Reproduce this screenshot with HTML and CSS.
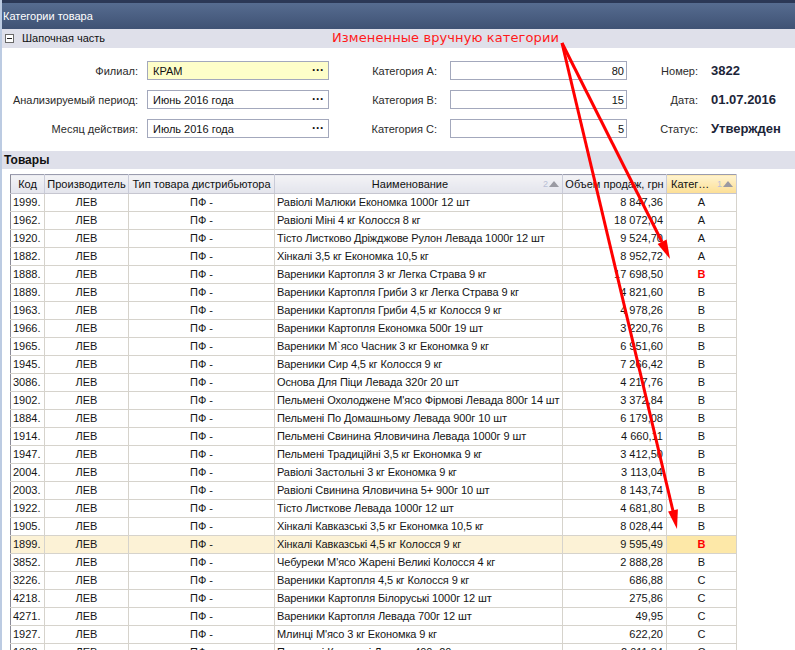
FILE: index.html
```html
<!DOCTYPE html>
<html lang="ru">
<head>
<meta charset="utf-8">
<title>Категории товара</title>
<link rel="stylesheet" href="styles.css">
</head>
<body>
<div class="page">
  <div class="titlebar">Категории товара</div>
  <div class="section-bar"><span class="collapse-box"></span>Шапочная часть</div>

  <div class="form">
    <label class="lbl lbl-a">Филиал:</label>
    <div class="field field-a yellow"><span>КРАМ</span><span class="dots">···</span></div>
    <label class="lbl lbl-b">Категория A:</label>
    <div class="field field-b num"><span>80</span></div>
    <label class="lbl lbl-c">Номер:</label>
    <div class="value">3822</div>

    <label class="lbl lbl-a">Анализируемый период:</label>
    <div class="field field-a"><span>Июнь 2016 года</span><span class="dots">···</span></div>
    <label class="lbl lbl-b">Категория B:</label>
    <div class="field field-b num"><span>15</span></div>
    <label class="lbl lbl-c">Дата:</label>
    <div class="value">01.07.2016</div>

    <label class="lbl lbl-a">Месяц действия:</label>
    <div class="field field-a"><span>Июль 2016 года</span><span class="dots">···</span></div>
    <label class="lbl lbl-b">Категория C:</label>
    <div class="field field-b num"><span>5</span></div>
    <label class="lbl lbl-c">Статус:</label>
    <div class="value">Утвержден</div>
  </div>

  <div class="group-bar">Товары</div>

  <div class="grid-wrap">
    <table class="grid">
      <colgroup>
        <col class="c-code"><col class="c-prod"><col class="c-type"><col class="c-name"><col class="c-sum"><col class="c-cat">
      </colgroup>
      <thead>
        <tr>
          <th>Код</th>
          <th>Производитель</th>
          <th>Тип товара дистрибьютора</th>
          <th class="sorted">Наименование<span class="sort">2<i></i></span></th>
          <th>Объем продаж, грн</th>
          <th class="sorted cat-head">Катег…<span class="sort">1<i></i></span></th>
        </tr>
      </thead>
      <tbody>
        <tr><td>1999.</td><td class="ctr">ЛЕВ</td><td class="ctr">ПФ -</td><td class="name">Равіолі Малюки Економка 1000г 12 шт</td><td class="num">8 847,36</td><td class="ctr">A</td></tr>
        <tr><td>1962.</td><td class="ctr">ЛЕВ</td><td class="ctr">ПФ -</td><td class="name">Равіолі Міні 4 кг Колосся 8 кг</td><td class="num">18 072,04</td><td class="ctr">A</td></tr>
        <tr><td>1920.</td><td class="ctr">ЛЕВ</td><td class="ctr">ПФ -</td><td class="name">Тісто Листково Дріжджове Рулон Левада 1000г 12 шт</td><td class="num">9 524,70</td><td class="ctr">A</td></tr>
        <tr><td>1882.</td><td class="ctr">ЛЕВ</td><td class="ctr">ПФ -</td><td class="name">Хінкалі 3,5 кг Економка 10,5 кг</td><td class="num">8 952,72</td><td class="ctr">A</td></tr>
        <tr><td>1888.</td><td class="ctr">ЛЕВ</td><td class="ctr">ПФ -</td><td class="name">Вареники Картопля 3 кг Легка Страва 9 кг</td><td class="num">17 698,50</td><td class="ctr changed">B</td></tr>
        <tr><td>1889.</td><td class="ctr">ЛЕВ</td><td class="ctr">ПФ -</td><td class="name">Вареники Картопля Гриби 3 кг Легка Страва 9 кг</td><td class="num">4 821,60</td><td class="ctr">B</td></tr>
        <tr><td>1963.</td><td class="ctr">ЛЕВ</td><td class="ctr">ПФ -</td><td class="name">Вареники Картопля Гриби 4,5 кг Колосся 9 кг</td><td class="num">4 978,26</td><td class="ctr">B</td></tr>
        <tr><td>1966.</td><td class="ctr">ЛЕВ</td><td class="ctr">ПФ -</td><td class="name">Вареники Картопля Економка 500г 19 шт</td><td class="num">3 220,76</td><td class="ctr">B</td></tr>
        <tr><td>1965.</td><td class="ctr">ЛЕВ</td><td class="ctr">ПФ -</td><td class="name">Вареники М`ясо Часник 3 кг Економка 9 кг</td><td class="num">6 951,60</td><td class="ctr">B</td></tr>
        <tr><td>1945.</td><td class="ctr">ЛЕВ</td><td class="ctr">ПФ -</td><td class="name">Вареники Сир 4,5 кг Колосся 9 кг</td><td class="num">7 266,42</td><td class="ctr">B</td></tr>
        <tr><td>3086.</td><td class="ctr">ЛЕВ</td><td class="ctr">ПФ -</td><td class="name">Основа Для Піци Левада 320г 20 шт</td><td class="num">4 217,76</td><td class="ctr">B</td></tr>
        <tr><td>1902.</td><td class="ctr">ЛЕВ</td><td class="ctr">ПФ -</td><td class="name">Пельмені Охолоджене М'ясо Фірмові Левада 800г 14 шт</td><td class="num">3 372,84</td><td class="ctr">B</td></tr>
        <tr><td>1884.</td><td class="ctr">ЛЕВ</td><td class="ctr">ПФ -</td><td class="name">Пельмені По Домашньому Левада 900г 10 шт</td><td class="num">6 179,08</td><td class="ctr">B</td></tr>
        <tr><td>1914.</td><td class="ctr">ЛЕВ</td><td class="ctr">ПФ -</td><td class="name">Пельмені Свинина Яловичина Левада 1000г 9 шт</td><td class="num">4 660,11</td><td class="ctr">B</td></tr>
        <tr><td>1947.</td><td class="ctr">ЛЕВ</td><td class="ctr">ПФ -</td><td class="name">Пельмені Традиційні 3,5 кг Економка 9 кг</td><td class="num">3 412,50</td><td class="ctr">B</td></tr>
        <tr><td>2004.</td><td class="ctr">ЛЕВ</td><td class="ctr">ПФ -</td><td class="name">Равіолі Застольні 3 кг Економка 9 кг</td><td class="num">3 113,04</td><td class="ctr">B</td></tr>
        <tr><td>2003.</td><td class="ctr">ЛЕВ</td><td class="ctr">ПФ -</td><td class="name">Равіолі Свинина Яловичина 5+ 900г 10 шт</td><td class="num">8 143,74</td><td class="ctr">B</td></tr>
        <tr><td>1922.</td><td class="ctr">ЛЕВ</td><td class="ctr">ПФ -</td><td class="name">Тісто Листкове Левада 1000г 12 шт</td><td class="num">4 681,80</td><td class="ctr">B</td></tr>
        <tr><td>1905.</td><td class="ctr">ЛЕВ</td><td class="ctr">ПФ -</td><td class="name">Хінкалі Кавказські 3,5 кг Економка 10,5 кг</td><td class="num">8 028,44</td><td class="ctr">B</td></tr>
        <tr class="current"><td>1899.</td><td class="ctr">ЛЕВ</td><td class="ctr">ПФ -</td><td class="name">Хінкалі Кавказські 4,5 кг Колосся 9 кг</td><td class="num">9 595,49</td><td class="ctr changed cat-cur">B</td></tr>
        <tr><td>3852.</td><td class="ctr">ЛЕВ</td><td class="ctr">ПФ -</td><td class="name">Чебуреки М'ясо Жарені Великі Колосся 4 кг</td><td class="num">2 888,28</td><td class="ctr">B</td></tr>
        <tr><td>3226.</td><td class="ctr">ЛЕВ</td><td class="ctr">ПФ -</td><td class="name">Вареники Картопля 4,5 кг Колосся 9 кг</td><td class="num">686,88</td><td class="ctr">C</td></tr>
        <tr><td>4218.</td><td class="ctr">ЛЕВ</td><td class="ctr">ПФ -</td><td class="name">Вареники Картопля Білоруські 1000г 12 шт</td><td class="num">275,86</td><td class="ctr">C</td></tr>
        <tr><td>4271.</td><td class="ctr">ЛЕВ</td><td class="ctr">ПФ -</td><td class="name">Вареники Картопля Левада 700г 12 шт</td><td class="num">49,95</td><td class="ctr">C</td></tr>
        <tr><td>1927.</td><td class="ctr">ЛЕВ</td><td class="ctr">ПФ -</td><td class="name">Млинці М'ясо 3 кг Економка 9 кг</td><td class="num">622,20</td><td class="ctr">C</td></tr>
        <tr><td>1928.</td><td class="ctr">ЛЕВ</td><td class="ctr">ПФ -</td><td class="name">Пельмені Класичні Левада 400г 20 шт</td><td class="num">2 011,84</td><td class="ctr">C</td></tr>
      </tbody>
    </table>
  </div>

  <div class="annotation">Измененные вручную категории</div>
  <svg class="arrows" width="795" height="650" viewBox="0 0 795 650">
    <line x1="562" y1="43" x2="662" y2="242" stroke="#ff0000" stroke-width="3"/>
    <polygon points="670,259 666.6,239.5 657.6,244" fill="#ff0000"/>
    <line x1="562" y1="43" x2="673" y2="511" stroke="#ff0000" stroke-width="3"/>
    <polygon points="677,529 677.9,509.3 668.1,511.6" fill="#ff0000"/>
  </svg>
</div>
</body>
</html>
```
FILE: styles.css
```css
html, body {
  margin: 0;
  padding: 0;
  background: #ffffff;
}
body {
  font-family: "Liberation Sans", Arial, sans-serif;
  font-size: 11px;
  color: #1a1a1a;
  overflow: hidden;
}
.page {
  position: relative;
  width: 795px;
  height: 650px;
  overflow: hidden;
  box-sizing: border-box;
  border-left: 2px solid #bccbe2;
}
.titlebar {
  margin-left: -2px;
  height: 26px;
  border-top: 3px solid #2b3856;
  background: linear-gradient(#566c90, #3f5274);
  color: #ffffff;
  font-size: 11px;
  line-height: 26px;
  padding-left: 3px;
}
.section-bar {
  height: 19px;
  background: #dfe0ea;
  font-size: 11px;
  line-height: 19px;
  color: #111;
  display: flex;
  align-items: center;
  padding-left: 3px;
}
.collapse-box {
  width: 7px;
  height: 7px;
  border: 1px solid #6a6a6a;
  margin-right: 8px;
  position: relative;
  background: #fff;
}
.collapse-box::after {
  content: "";
  position: absolute;
  left: 1px;
  top: 3px;
  width: 5px;
  height: 1px;
  background: #222;
}
.form {
  height: 103px;
  box-sizing: border-box;
  padding-top: 13px;
  margin-left: -2px;
  display: grid;
  grid-template-columns: 138px 191px 121px 177px 84px 1fr;
  grid-auto-rows: 19px;
  row-gap: 10px;
  align-items: center;
  font-size: 11px;
}
.lbl {
  text-align: right;
  color: #2b2b2b;
  white-space: nowrap;
}
.lbl-b, .lbl-c {
  padding-right: 13px;
}
.field {
  height: 19px;
  box-sizing: border-box;
  border: 1px solid #a3a8bc;
  background: #fff;
  display: flex;
  align-items: center;
  justify-content: space-between;
  padding: 0 4px 0 5px;
  color: #111;
}
.field-a {
  margin-left: 9px;
}
.field.yellow {
  background: #fefec9;
}
.field.num {
  justify-content: flex-end;
  padding-right: 2px;
}
.dots {
  font-weight: bold;
  font-size: 12px;
  margin-top: -2px;
}
.value {
  font-weight: bold;
  font-size: 13px;
  color: #1c2538;
  white-space: nowrap;
}
.group-bar {
  height: 18px;
  background: #dfe0ea;
  font-weight: bold;
  font-size: 12px;
  line-height: 18px;
  padding-left: 2px;
  color: #111;
}
.grid-wrap {
  padding: 5px 0 0 8px;
}
.grid {
  border-collapse: collapse;
  table-layout: fixed;
  width: 727px;
  border-left: 1px solid #8a8a96;
}
.c-code { width: 34px; }
.c-prod { width: 84px; }
.c-type { width: 146px; }
.c-name { width: 288px; }
.c-sum { width: 104px; }
.c-cat { width: 70px; }
.grid th {
  height: 18px;
  padding: 0 1px;
  font-weight: normal;
  font-size: 11px;
  white-space: nowrap;
  overflow: hidden;
  text-align: center;
  border-top: 1px solid #9a9cae;
  border-right: 1px solid #c9cbd8;
  border-bottom: 1px solid #c6c6d0;
  background: linear-gradient(#f3f3f6, #e3e4ec);
  color: #111;
  position: relative;
}
.grid th.sorted {
  padding-right: 18px;
}
.grid th.cat-head {
  text-align: left;
  padding-left: 4px;
  background: linear-gradient(#fff3cf, #fcdf95);
}
.sort {
  position: absolute;
  right: 3px;
  top: 4px;
  font-size: 9px;
  color: #b9bfd6;
  display: flex;
  align-items: center;
  gap: 1px;
}
.sort i {
  display: block;
  width: 0;
  height: 0;
  border-left: 5px solid transparent;
  border-right: 5px solid transparent;
  border-bottom: 6px solid #9a9aa2;
}
.grid td {
  height: 17px;
  padding: 0 2px;
  font-size: 11px;
  white-space: nowrap;
  overflow: hidden;
  border-right: 1px solid #d6d3cc;
  border-bottom: 1px solid #d6d3cc;
  color: #151515;
  line-height: 17px;
}
.grid td.name {
  letter-spacing: -0.1px;
  padding-left: 2px;
  padding-right: 0;
}
.grid td.ctr { text-align: center; }
.grid td.num { text-align: right; padding-right: 3px; }
.grid td.changed {
  color: #ff0000;
  font-weight: bold;
}
.grid tr.current td {
  background: #fcf2d6;
}
.grid tr.current td.cat-cur {
  background: #fde8a8;
}
.annotation {
  position: absolute;
  left: 330px;
  top: 30px;
  font-family: "DejaVu Sans", sans-serif;
  font-size: 13px;
  letter-spacing: 0.1px;
  color: #ff1a1a;
  white-space: nowrap;
}
.arrows {
  position: absolute;
  left: -2px;
  top: 0;
  pointer-events: none;
}
```
